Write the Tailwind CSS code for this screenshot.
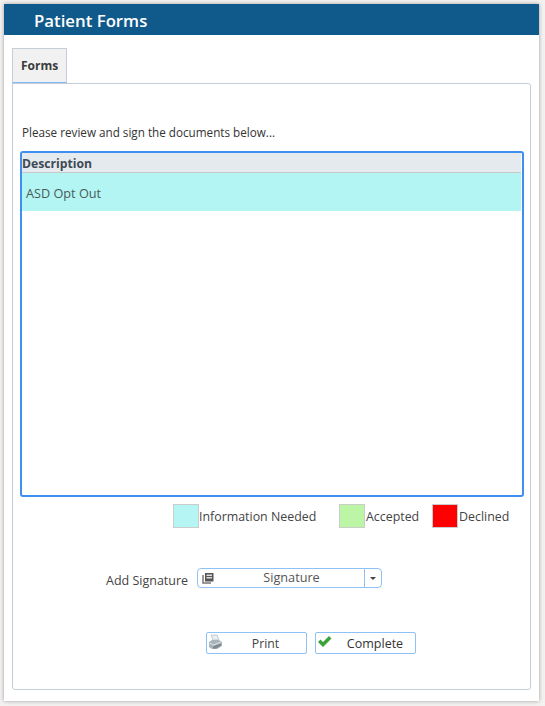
<!DOCTYPE html>
<html>
<head>
<meta charset="utf-8">
<script src="https://cdn.jsdelivr.net/npm/@tailwindcss/browser@4"></script>
</head>
<body class="bg-[#f3f2f1] font-['Open_Sans',sans-serif] text-[12px] text-[#333] w-[545px] h-[706px] overflow-hidden">
<div class="ml-[4px] mt-[4px] w-[535px] h-[697px] bg-white shadow-[0_0_4px_rgba(0,0,0,0.35)] flex flex-col">
  <div class="h-[31px] bg-[#0f5a8a] pl-[30px] text-white text-[16.8px] font-semibold leading-[33px]">Patient Forms</div>
  <div class="pl-[8px] pr-[8px] pt-[13px] flex flex-col">
    <div class="w-[55px] h-[36px] bg-[#f1f1f1] border border-[#c5ced8] border-b-2 border-b-[#7fb8f5] font-bold text-[#3b3b3b] pl-[8px] leading-[33px]">Forms</div>
    <div class="-mt-px h-[607px] w-[519px] border border-[#c5ced8] rounded-tr-[3px] rounded-b-[3px] flex flex-col px-[7px]">
      <div class="pt-[39px] h-[67px] pl-[2px] leading-[18px] text-[11.7px] text-[#333]">Please review and sign the documents below...</div>
      <div class="w-[504px] h-[346px] border-2 border-[#3d8ff0] rounded-[3px] flex flex-col pr-px">
        <div class="h-[20px] bg-[#e4eaee] border-b border-[#c8c8c8] font-bold text-[12.2px] text-[#3f4a54] leading-[21px]">Description</div>
        <div class="h-[38px] bg-[#b3f5f3] pl-[4px] leading-[40px] text-[12.7px] text-[#4a5a5a]">ASD Opt Out</div>
      </div>
      <div class="mt-[7px] flex h-[24px] items-center text-[12.4px] text-[#444]">
        <div class="ml-[153px] w-[26px] h-[24px] bg-[#b5f5f4] border border-[#cccccc]"></div>
        <span class="w-[140px] pt-[2px]">Information Needed</span>
        <div class="w-[26px] h-[24px] bg-[#bcf5a6] border border-[#cccccc]"></div>
        <span class="w-[67px] pt-[2px] pl-px">Accepted</span>
        <div class="w-[26px] h-[24px] bg-[#ff0000] border border-[#cccccc]"></div>
        <span class="pt-[2px] pl-px">Declined</span>
      </div>
      <div class="mt-[40px] flex h-[20px] items-center">
        <span class="ml-[86px] w-[91px] pt-[7px] text-[12.5px] text-[#444]">Add Signature</span>
        <div class="w-[185px] h-[20px] border border-[#8ec2f7] rounded-[4px] flex items-center">
          <div class="w-[167px] h-full border-r border-[#8ec2f7] flex items-center relative">
            <svg class="ml-[4px]" width="12" height="12" viewBox="0 0 12 12"><path d="M1 3v8h8" fill="none" stroke="#777" stroke-width="1.5"/><rect x="3" y="1" width="8.5" height="8.5" fill="#555"/><rect x="4.5" y="2.5" width="5.5" height="1.5" fill="#ddd"/><rect x="4.5" y="5" width="5.5" height="1.5" fill="#ddd"/></svg>
            <span class="flex-1 text-center text-[12.7px] text-[#555] pl-[5px] -mt-[1px]">Signature</span>
          </div>
          <div class="flex-1 flex justify-center">
            <svg width="6" height="3" viewBox="0 0 6 3"><path d="M0 0h6L3 3z" fill="#444"/></svg>
          </div>
        </div>
      </div>
      <div class="mt-[44px] flex h-[22px] ml-[186px] gap-[8px]">
        <div class="w-[101px] h-[22px] border border-[#8ec2f7] rounded-[2px] flex items-center">
          <svg class="ml-[1px] -mt-[3px]" width="16" height="16" viewBox="0 0 16 16"><path d="M3 1h6l2 5H5z" fill="#e8eef2" stroke="#b0bac2" stroke-width=".7"/><path d="M1 8l3-2h7l3 2v4l-5 3H4l-3-2z" fill="#a9b3ba"/><path d="M1.5 8.500l4 2 7.500-3v1l-7.500 3-4-2z" fill="#dfe4e8"/><path d="M5 12.500l8-3v2l-5 3H5z" fill="#7d878e"/></svg>
          <span class="flex-1 text-center text-[12.3px] text-[#444] pl-[1px] pt-[3px]">Print</span>
        </div>
        <div class="w-[101px] h-[22px] border border-[#8ec2f7] rounded-[2px] flex items-center">
          <svg class="ml-[1px] -mt-[3px]" width="15" height="13" viewBox="0 0 15 13"><path d="M1 7l2.500-2.500L6 7l6-6 2.500 2.500L6 12z" fill="#3ba33a"/></svg>
          <span class="flex-1 text-center text-[12.5px] text-[#333] pl-[3px] pt-[3px]">Complete</span>
        </div>
      </div>
    </div>
  </div>
</div>
</body>
</html>
